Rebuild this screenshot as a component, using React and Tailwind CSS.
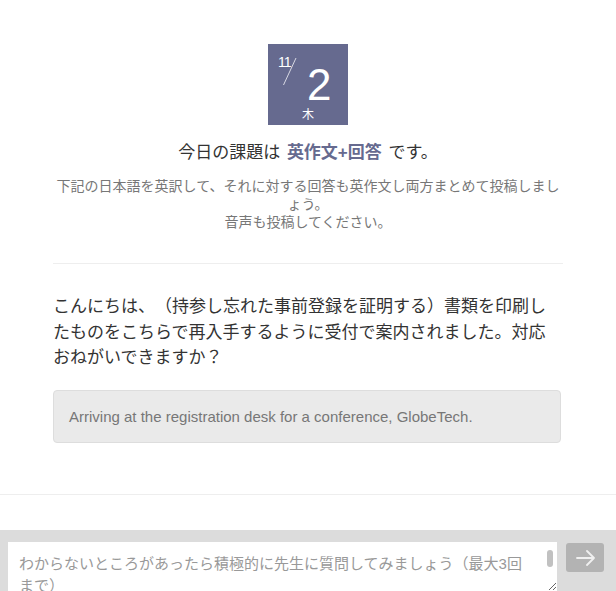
const jp = { fontFamily: '"Liberation Sans", "Noto Sans CJK JP", sans-serif' };

const DateBadge = () => (
  <div className="relative w-[80px] h-[81px] bg-[#666a8f] text-white">
    <span className="absolute left-[10px] top-[11px] text-[14px] leading-none tracking-[-1px]">11</span>
    <svg className="absolute left-[14px] top-[13px]" width="16" height="30" viewBox="0 0 16 30">
      <line x1="1.5" y1="28" x2="14" y2="1" stroke="#d8d9e4" strokeWidth="1" />
    </svg>
    <span className="absolute left-[39px] top-[24px] text-[44px] leading-[34px]">2</span>
    <span className="absolute left-[34px] top-[64px] text-[12px] leading-[14px]">木</span>
  </div>
);

export default function App() {
  return (
    <div
      className="h-[591px] overflow-hidden flex flex-col bg-white text-[#333] [text-spacing-trim:space-all]"
      style={jp}
    >
      <main className="flex-1 flex flex-col items-center pt-[44px]">
        <DateBadge />
        <h2 className="mt-[17px] text-[17px] leading-[22px] [word-spacing:2px]">
          今日の課題は <span className="font-bold text-[#666a8f]">英作文+回答</span> です。
        </h2>
        <p className="mt-[13px] w-[510px] text-center text-[14px] leading-[18px] text-[#777]">
          下記の日本語を英訳して、それに対する回答も英作文し両方まとめて投稿しましょう。
          <br />
          音声も投稿してください。
        </p>
        <hr className="mt-[32px] w-[510px] border-0 border-t border-[#eee]" />
        <div className="w-[510px] pt-[30px]">
          <p className="w-[508px] text-[17px] leading-[25.5px] text-[#333]">
            こんにちは、（持参し忘れた事前登録を証明する）書類を印刷したものをこちらで再入手するように受付で案内されました。対応おねがいできますか？
          </p>
          <div className="mt-[19px] w-[508px] rounded-[4px] border border-[#ddd] bg-[#eaeaea] px-[15px] py-[15px] text-[15px] leading-[21px] text-[#777]">
            Arriving at the registration desk for a conference, GlobeTech.
          </div>
        </div>
      </main>
      <div className="h-[36px] border-t border-[#eee] shrink-0" />
      <footer className="shrink-0 h-[61px] bg-[#dcdcdc] flex items-start gap-[9px] pl-[8px] pt-[12px]">
        <div className="relative w-[549px] h-[49px] bg-white">
          <textarea
            className="block w-full h-full resize-y overflow-hidden bg-white pl-[11px] pr-[24px] pt-[11px] text-[15px] leading-[22px] outline-none placeholder:text-[#999]"
            placeholder="わからないところがあったら積極的に先生に質問してみましょう（最大3回まで）"
            style={jp}
          />
          <span className="absolute left-[539px] top-[8px] w-[6px] h-[17px] rounded-full bg-[#c1c1c1]" />
        </div>
        <button className="mt-[1px] w-[38px] h-[29px] rounded-[3px] bg-[#b3b3b3] flex items-center justify-center">
          <svg width="19" height="16" viewBox="0 0 19 16" fill="none" stroke="#f0f0f0" strokeWidth="1.8" strokeLinecap="round" strokeLinejoin="round">
            <path d="M1 8h17M11 1l7 7-7 7" />
          </svg>
        </button>
      </footer>
    </div>
  );
}
